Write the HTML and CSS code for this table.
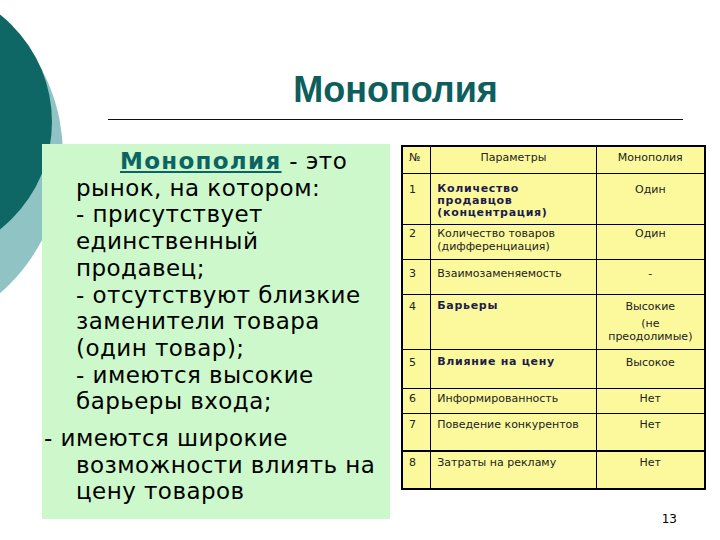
FILE: index.html
```html
<!DOCTYPE html>
<html lang="ru">
<head>
<meta charset="utf-8">
<title>Монополия</title>
<link rel="stylesheet" href="styles.css">
</head>
<body>
<div class="slide">
  <div class="deco deco-light"></div>
  <div class="deco deco-dark"></div>
  <header class="head">
    <h1 class="title">Монополия</h1>
  </header>
  <main class="content">
    <section class="defbox">
      <p class="p1"><span class="term">Монополия</span> - это<br>рынок, на котором:<br>- присутствует<br>единственный<br>продавец;<br>- отсутствуют близкие<br>заменители товара<br>(один товар);<br>- имеются высокие<br>барьеры входа;</p>
      <p class="p2">- имеются широкие<br>возможности влиять на<br>цену товаров</p>
    </section>
    <div class="right">
      <table class="grid">
        <colgroup><col class="c1"><col class="c2"><col class="c3"></colgroup>
        <tr class="r0"><td>№</td><td class="mid">Параметры</td><td class="mid">Монополия</td></tr>
        <tr class="r1"><td>1</td><td class="b">Количество<br>продавцов<br>(концентрация)</td><td class="mid">Один</td></tr>
        <tr class="r2"><td>2</td><td>Количество товаров<br>(дифференциация)</td><td class="mid">Один</td></tr>
        <tr class="r3"><td>3</td><td>Взаимозаменяемость</td><td class="mid">-</td></tr>
        <tr class="r4"><td>4</td><td class="b">Барьеры</td><td class="mid">Высокие<span class="sub">(не<br>преодолимые)</span></td></tr>
        <tr class="r5"><td>5</td><td class="b">Влияние на цену</td><td class="mid">Высокое</td></tr>
        <tr class="r6"><td>6</td><td>Информированность</td><td class="mid">Нет</td></tr>
        <tr class="r7"><td>7</td><td>Поведение конкурентов</td><td class="mid">Нет</td></tr>
        <tr class="r8"><td>8</td><td>Затраты на рекламу</td><td class="mid">Нет</td></tr>
      </table>
      <div class="pagenum">13</div>
    </div>
  </main>
</div>
</body>
</html>
```

FILE: styles.css
```css
html, body {
  margin: 0;
  padding: 0;
  background: #ffffff;
}
.slide {
  position: relative;
  width: 720px;
  height: 540px;
  overflow: hidden;
  background: #ffffff;
}
.deco {
  position: absolute;
  border-radius: 50%;
}
.deco-light {
  left: -303px;
  top: -28px;
  width: 366px;
  height: 366px;
  background: #90c4c4;
}
.deco-dark {
  left: -222px;
  top: -15px;
  width: 274px;
  height: 274px;
  background: #0f6765;
}
.head {
  position: relative;
  padding: 70px 37px 0 108px;
}
.title {
  margin: 0;
  padding-bottom: 9px;
  border-bottom: 1px solid #111;
  font-family: "Liberation Sans", Arial, sans-serif;
  font-weight: bold;
  font-size: 36px;
  line-height: 40px;
  color: #0d5e5d;
  text-align: center;
}
.content {
  position: relative;
  display: flex;
  align-items: flex-start;
  gap: 11px;
  padding: 24px 0 0 42px;
}
.defbox {
  width: 348px;
  height: 371px;
  padding-top: 4px;
  background: #ccf8cc;
  font-family: "DejaVu Sans", Verdana, sans-serif;
  font-size: 23px;
  letter-spacing: 0.45px;
  line-height: 26.7px;
  color: #000;
  white-space: nowrap;
}
.defbox p {
  margin: 0;
  padding-left: 34px;
}
.p1 {
  text-indent: 44px;
}
.p2 {
  margin-top: 10px !important;
  text-indent: -32px;
}
.term {
  color: #0b6363;
  font-weight: bold;
  letter-spacing: 1.3px;
  text-decoration: underline;
}
.right {
  margin-top: 1px;
  display: flex;
  flex-direction: column;
}
.grid {
  width: 305px;
  border-collapse: collapse;
  border: 2px solid #000;
  background: #fcf99c;
  font-family: "DejaVu Sans", Verdana, sans-serif;
  font-size: 11px;
  line-height: 13px;
  color: #222;
}
.c1 { width: 29px; }
.c2 { width: 166px; }
.c3 { width: 110px; }
.grid td {
  box-sizing: border-box;
  border: 1px solid #000;
  vertical-align: top;
  padding: 4px 6px 0 6px;
  white-space: nowrap;
}
.grid td.mid {
  text-align: center;
  padding-left: 2px;
  padding-right: 2px;
}
.grid td.b {
  font-weight: bold;
  color: #1c1c4c;
  letter-spacing: 0.7px;
  line-height: 12px;
}
.sub {
  display: block;
  margin-top: 4px;
}
.r0 td { height: 27px; padding-top: 4px; }
.r1 td { height: 51px; padding-top: 9px; }
.r2 td { height: 35px; padding-top: 2px; }
.r3 td { height: 35px; padding-top: 7px; }
.r4 td { height: 55px; padding-top: 5px; }
.r5 td { height: 39px; padding-top: 6px; }
.r6 td { height: 25px; padding-top: 3px; }
.r7 td { height: 38px; padding-top: 4px; border-bottom: 2px solid #000; }
.r8 td { height: 38px; padding-top: 4px; }
.pagenum {
  margin-top: 22px;
  padding-right: 29px;
  text-align: right;
  font-family: "DejaVu Sans", Verdana, sans-serif;
  font-size: 12px;
  line-height: 14px;
  color: #000;
}
```
